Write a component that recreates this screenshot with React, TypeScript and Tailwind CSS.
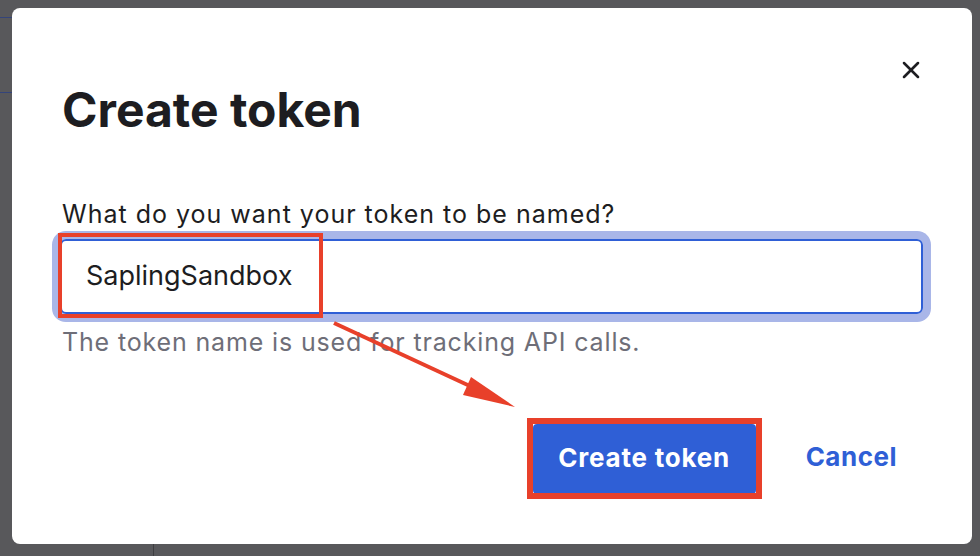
import { X } from 'lucide-react';

const font = { fontFamily: 'Inter, "Noto Sans", sans-serif' };

export default function App() {
    return (
        <div className="relative w-[980px] h-[556px] overflow-hidden bg-[#58585b] pt-[8px] pl-[12px]" style={font}>
            {/* faint page behind the overlay */}
            <div className="absolute left-0 top-[17px] h-px w-[12px] bg-[#34447a]" />
            <div className="absolute left-0 top-[92px] h-px w-[12px] bg-[#34447a]" />
            <div className="absolute left-[153px] top-[544px] h-[12px] w-px bg-[#3e3e41]" />

            {/* Modal */}
            <div className="relative w-[960px] h-[536px] rounded-[8px] bg-white pt-[52px] pl-[50px] pr-[51px] text-[#1d1d21]">
                <div className="flex justify-end h-[20px]">
                    <X size={28} strokeWidth={2.2} className="-mt-[4px] -mr-[4px] text-[#1d1d21]" />
                </div>

                <h1 className="mt-[6px] text-[48px] leading-[48px] font-bold">Create token</h1>

                <label className="block mt-[66px] text-[25px] leading-[28px] tracking-[1px]">What do you want your token to be named?</label>

                <div className="mt-[11px] -ml-[2px] w-[863px] h-[75px] rounded-[6px] border-2 border-[#2f5fd6] shadow-[0_0_0_8px_#a9b6e8] flex items-center pl-[24px] text-[27px]">
                    SaplingSandbox
                </div>

                <p className="mt-[14px] text-[25px] leading-[28px] tracking-[0.85px] text-[#6e6e78]">The token name is used for tracking API calls.</p>

                <div className="mt-[68px] flex items-center justify-end pr-[24px] gap-[50px]">
                    <button className="w-[223px] h-[70px] pb-[4px] rounded-[4px] bg-[#2f5fd6] text-white text-[26px] tracking-[0.8px] font-bold">Create token</button>
                    <button className="pb-[5px] text-[26px] tracking-[0.5px] font-bold text-[#2f5fd6]">Cancel</button>
                </div>
            </div>

            {/* annotations */}
            <svg className="absolute inset-0 pointer-events-none" width="980" height="556" viewBox="0 0 980 556">
                <rect x="60" y="235" width="261" height="81" fill="none" stroke="#e8402a" strokeWidth="4" />
                <rect x="530" y="421" width="229" height="75" fill="none" stroke="#e8402a" strokeWidth="6" />
                <line x1="334" y1="323" x2="472" y2="387" stroke="#e8402a" strokeWidth="4" />
                <polygon points="515,407 471,377 463,395" fill="#e8402a" />
            </svg>
        </div>
    );
}
